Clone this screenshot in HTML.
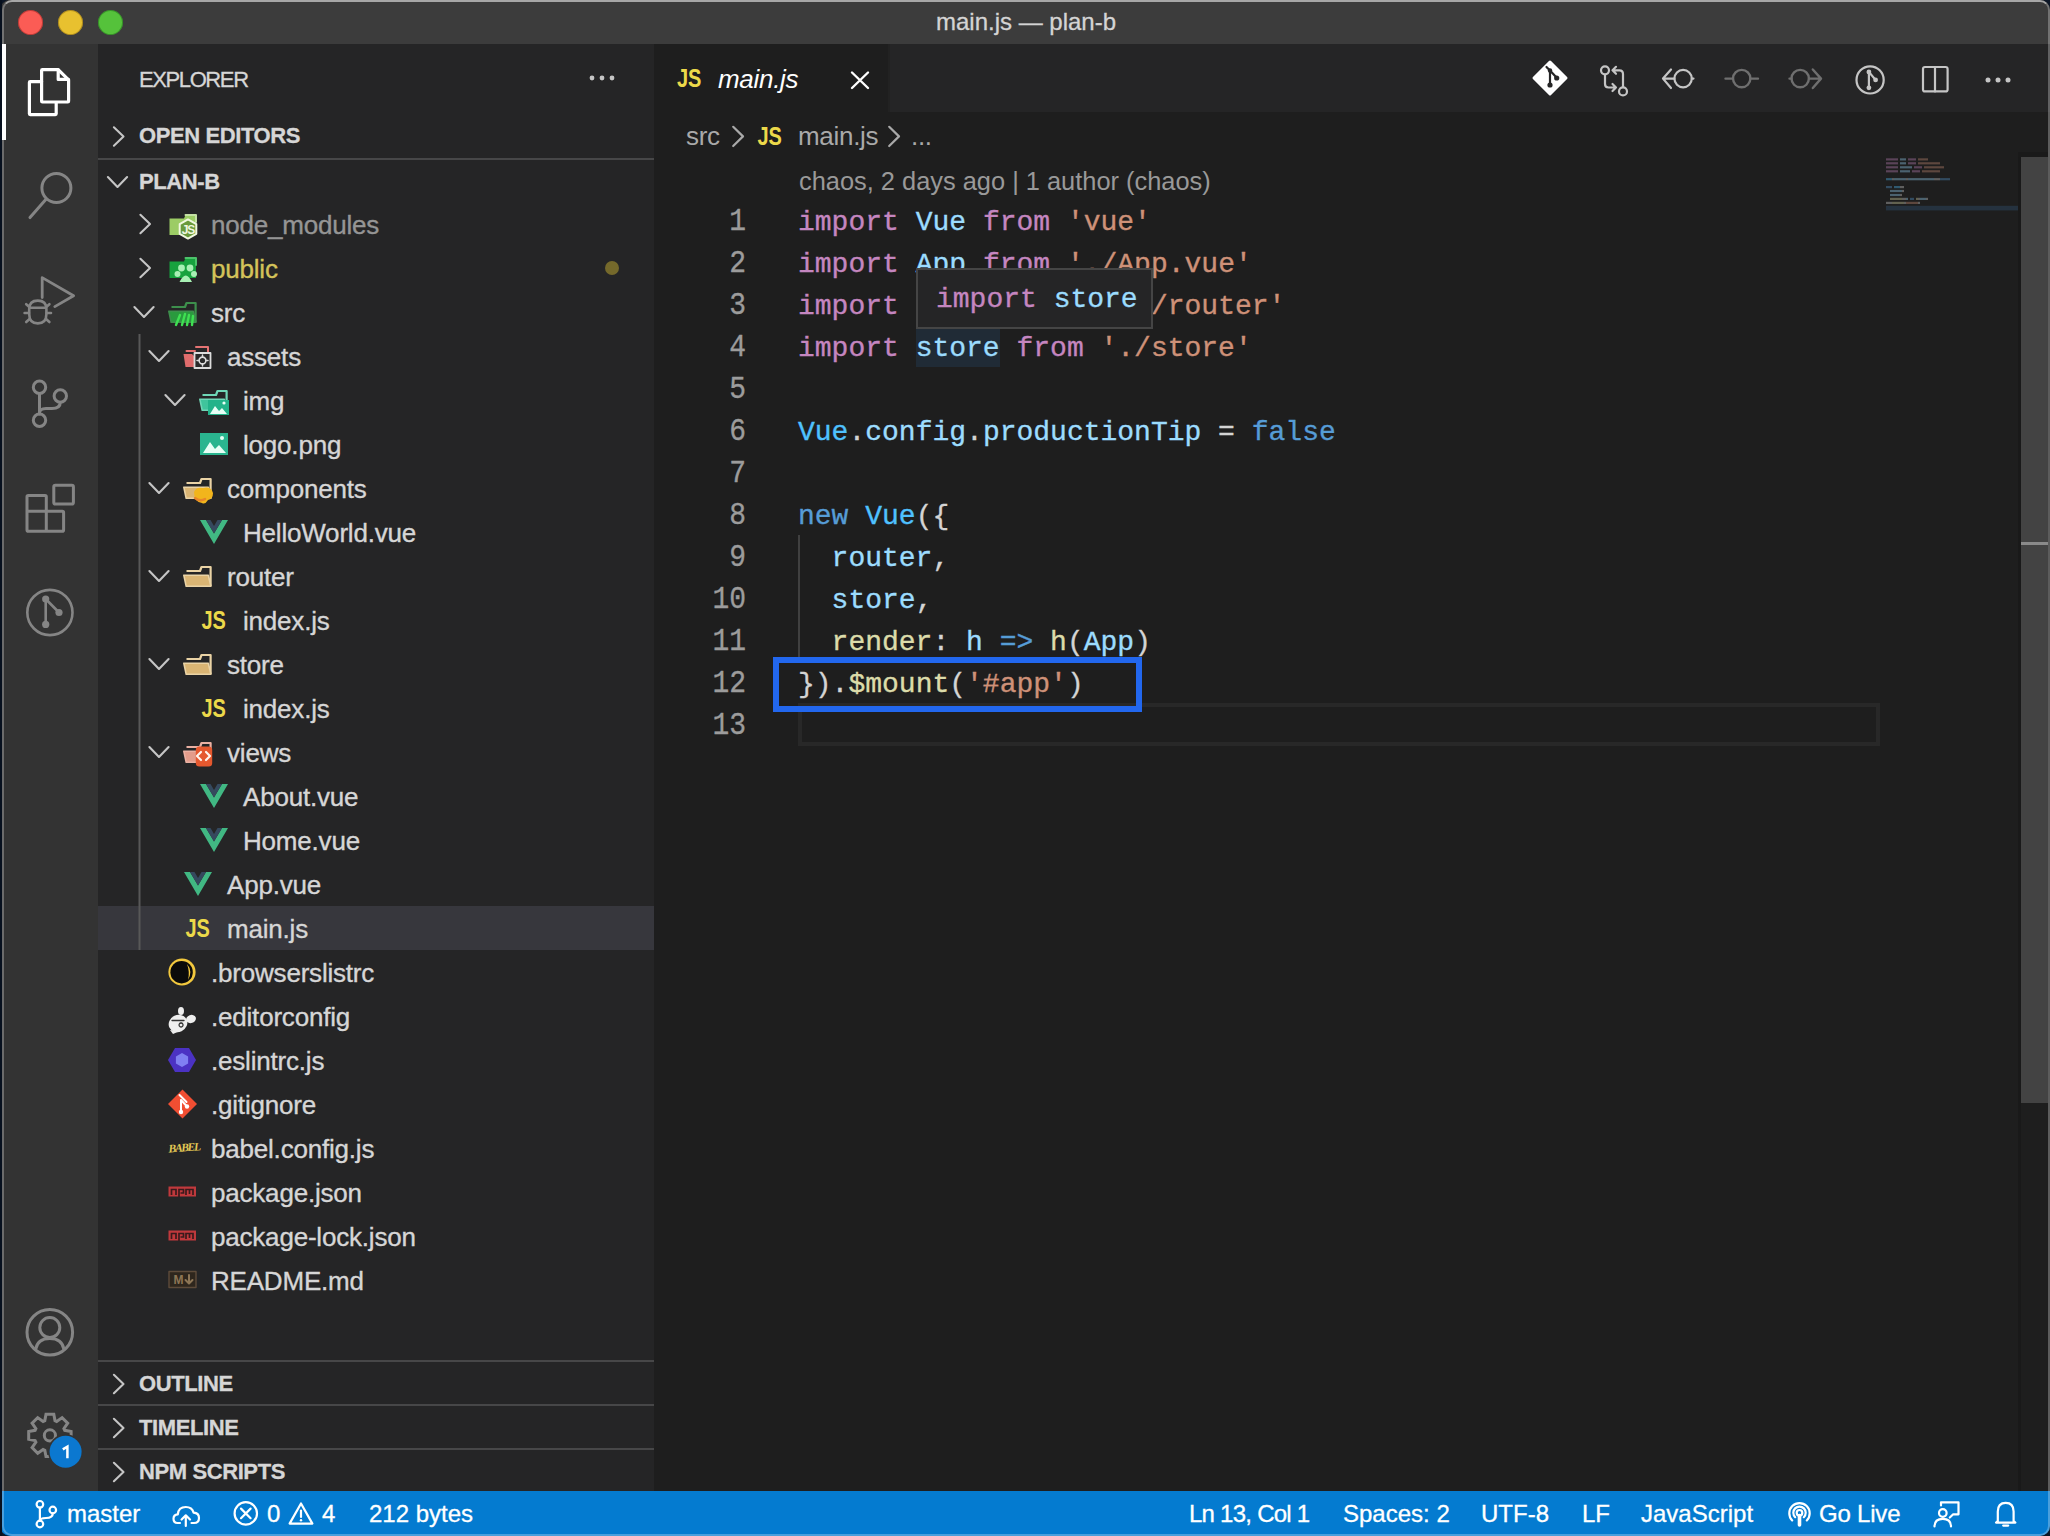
<!DOCTYPE html>
<html><head><meta charset="utf-8">
<style>
*{box-sizing:border-box;margin:0;padding:0}
html,body{width:2050px;height:1536px;overflow:hidden;background:#0c1626}
body{font-family:"Liberation Sans",sans-serif;position:relative}
.abs{position:absolute}
#win{position:absolute;left:0;top:0;width:2050px;height:1536px;border-radius:10px;overflow:hidden;background:#1e1e1e}
#frame{position:absolute;left:2px;top:0;width:2048px;height:1536px;border-radius:10px;border:2px solid rgba(255,255,255,0.28);border-top-color:rgba(255,255,255,0.55);pointer-events:none}
#lstrip{position:absolute;left:0;top:0;width:2px;height:1536px;background:#07101e}
#title{left:0;top:0;width:2050px;height:44px;background:#3c3c3c}
#title .t{left:0;width:2050px;top:0;height:44px;line-height:44px;text-align:center;color:#d4d4d4;font-size:24px;-webkit-text-stroke:0.3px currentColor;padding-left:2px}
.tl{width:25px;height:25px;border-radius:50%;top:10px}
#act{left:0;top:44px;width:98px;height:1447px;background:#333333}
#side{left:98px;top:44px;width:556px;height:1447px;background:#252526}
#tabs{left:654px;top:44px;width:1396px;height:68px;background:#252526}
#status{left:0;top:1491px;width:2050px;height:45px;background:#047bd0;color:#fff;font-size:24px}
.row{position:absolute;left:0;width:556px;height:44px;font-size:26px;color:#cccccc;line-height:44px;white-space:pre}
.row span.l{position:absolute;top:0}
.lbl{position:absolute;height:44px;line-height:45px;padding-top:1px;font-size:26px;color:#d6d6d6;white-space:pre;letter-spacing:-0.2px;-webkit-text-stroke:0.35px currentColor}
.hdrt{position:absolute;height:44px;line-height:44px;font-size:22px;font-weight:bold;color:#d6d6d6;white-space:pre;letter-spacing:-0.4px;-webkit-text-stroke:0.3px currentColor}
.hdr{position:absolute;left:0;width:556px;height:44px;font-size:22px;font-weight:bold;color:#cccccc;line-height:44px}
.code{position:absolute;font-family:"Liberation Mono",monospace;font-size:28px;line-height:42px;white-space:pre;color:#d4d4d4;-webkit-text-stroke:0.35px currentColor}
.code span{-webkit-text-stroke:0.35px currentColor}
.ln{position:absolute;font-family:"Liberation Mono",monospace;font-size:28px;line-height:42px;color:#858585;text-align:right;width:100px;-webkit-text-stroke:0.3px currentColor}
.k{color:#c586c0}.v{color:#9cdcfe}.c{color:#4fc1ff}.s{color:#ce9178}.b{color:#569cd6}.f{color:#dcdcaa}
</style></head><body>
<div id="win">
  <div id="title" class="abs">
    <div class="t abs">main.js — plan-b</div>
    <div class="tl abs" style="left:18px;background:#fb5c55;box-shadow:inset 0 0 0 1px rgba(120,20,20,0.45)"></div>
    <div class="tl abs" style="left:58px;background:#e8c12f;box-shadow:inset 0 0 0 1px rgba(110,80,10,0.45)"></div>
    <div class="tl abs" style="left:98px;background:#55c23b;box-shadow:inset 0 0 0 1px rgba(20,90,20,0.45)"></div>
  </div>
  <div id="act" class="abs">
    <div class="abs" style="left:2px;top:0;width:4px;height:96px;background:#ffffff"></div>
    <svg class="abs" style="left:0;top:0" width="98" height="1447" viewBox="0 44 98 1447" fill="none" stroke-linecap="round" stroke-linejoin="round">
      <g stroke="#ffffff" stroke-width="3.2">
        <path d="M41.6 81.6 H30.2 Q29.4 81.6 29.4 82.4 V113.8 Q29.4 114.6 30.2 114.6 H55.4 Q56.2 114.6 56.2 113.8 V102.8"/>
        <path d="M42.4 69.6 H58.2 L68.6 79.8 V101.2 Q68.6 102 67.8 102 H42.4 Q41.6 102 41.6 101.2 V70.4 Q41.6 69.6 42.4 69.6 Z"/>
        <path d="M58.2 69.8 V79.4 H68.4"/>
      </g>
      <g stroke="#858585" stroke-width="3">
        <circle cx="56.4" cy="188" r="14.5"/>
        <path d="M45.8 199.4 L30 217.6"/>
        <path d="M42.2 297.5 V277.6 L73.6 295.8 L54.8 306.6" stroke-width="2.8"/>
        <path d="M29.2 309 Q29.2 300.6 37.8 300.6 Q46.4 300.6 46.4 309 V314 Q46.4 323.4 37.8 323.4 Q29.2 323.4 29.2 314 Z M29.2 307.8 H46.4" stroke-width="2.6"/><path d="M26.2 304.2 L29.4 307 M49.4 304.2 L46.2 307 M24.6 313 H29 M51 313 H46.6 M26.2 322 L29.6 319 M49.4 322 L46 319" stroke-width="2.6"/>
        <circle cx="39.5" cy="387.3" r="6.2"/>
        <circle cx="39.5" cy="420.2" r="6.2"/>
        <circle cx="60.3" cy="396" r="6.2"/>
        <path d="M39.5 393.5 V414"/>
        <path d="M60.3 402.2 Q60.3 408.5 52 408.5 H46 Q39.5 408.5 39.5 413"/>
        <path d="M28.3 495.5 H45 Q46.3 495.5 46.3 496.8 V511.3 H62.3 Q63.6 511.3 63.6 512.6 V529.9 Q63.6 531.2 62.3 531.2 H28.3 Q27 531.2 27 529.9 V496.8 Q27 495.5 28.3 495.5 Z M27 511.3 H46.3 V531.2"/>
        <rect x="53.8" y="485.2" width="19.6" height="18.8" rx="1.6"/>
        <circle cx="49.9" cy="612.5" r="22.6" stroke-width="2.6"/>
        <path d="M45.7 599 V624.4 M45.7 599 L59 612.5" stroke-width="2.6"/>
      </g>
      <g fill="#858585" stroke="none">
        <circle cx="45.7" cy="599" r="3.6"/><circle cx="45.7" cy="624.4" r="3.6"/><circle cx="59" cy="612.5" r="3.6"/>
      </g>
      <g stroke="#858585" stroke-width="3">
        <circle cx="49.8" cy="1332.3" r="22.8"/>
        <circle cx="49.8" cy="1327.6" r="10"/>
        <path d="M35.6 1349.6 Q37.5 1338.6 49.8 1338.6 Q62.1 1338.6 64 1349.6"/>
      </g>
      <g><path stroke="#858585" stroke-width="3" stroke-linejoin="miter" d="M44.8 1420.6 L46.0 1414.2 L53.8 1414.2 L55.0 1420.6 L56.7 1421.4 L62.1 1417.6 L67.7 1423.2 L63.9 1428.6 L64.7 1430.3 L71.1 1431.5 L71.1 1439.3 L64.7 1440.5 L63.9 1442.2 L67.7 1447.6 L62.1 1453.2 L56.7 1449.4 L55.0 1450.2 L53.8 1456.6 L46.0 1456.6 L44.8 1450.2 L43.1 1449.4 L37.7 1453.2 L32.1 1447.6 L35.9 1442.2 L35.1 1440.5 L28.7 1439.3 L28.7 1431.5 L35.1 1430.3 L35.9 1428.6 L32.1 1423.2 L37.7 1417.6 L43.1 1421.4 Z"/><circle cx="49.9" cy="1435.4" r="5.6" stroke="#858585" stroke-width="3"/></g>
      <circle cx="65.6" cy="1451.7" r="17.5" fill="#333333"/><circle cx="65.6" cy="1451.7" r="16" fill="#0b78d0"/><path d="M62.8 1449.4 L67.4 1446.6 V1458.2" stroke="#ffffff" stroke-width="2.5" fill="none" stroke-linecap="butt" stroke-linejoin="miter"/>
    </svg>
    
  </div>
  <div id="side" class="abs">
<div class="hdrt" style="left:41px;top:0;height:70px;line-height:72px;font-weight:normal;letter-spacing:-1.4px">EXPLORER</div>
<div class="hdrt" style="left:41px;top:70px">OPEN EDITORS</div>
<div class="abs" style="left:0;top:114px;width:556px;height:2px;background:#474748"></div>
<div class="hdrt" style="left:41px;top:116px">PLAN-B</div>
<div class="abs" style="left:0;top:1316px;width:556px;height:2px;background:#474748"></div>
<div class="hdrt" style="left:41px;top:1318px">OUTLINE</div>
<div class="abs" style="left:0;top:1360px;width:556px;height:2px;background:#474748"></div>
<div class="hdrt" style="left:41px;top:1362px">TIMELINE</div>
<div class="abs" style="left:0;top:1404px;width:556px;height:2px;background:#474748"></div>
<div class="hdrt" style="left:41px;top:1406px">NPM SCRIPTS</div>
<div class="lbl" style="left:113px;top:158px;color:#959595;">node_modules</div>
<div class="lbl" style="left:113px;top:202px;color:#d4c35a;">public</div>
<div class="lbl" style="left:113px;top:246px;">src</div>
<div class="lbl" style="left:129px;top:290px;">assets</div>
<div class="lbl" style="left:145px;top:334px;">img</div>
<div class="lbl" style="left:145px;top:378px;">logo.png</div>
<div class="lbl" style="left:129px;top:422px;">components</div>
<div class="lbl" style="left:145px;top:466px;">HelloWorld.vue</div>
<div class="lbl" style="left:129px;top:510px;">router</div>
<div class="lbl" style="left:145px;top:554px;">index.js</div>
<div class="lbl" style="left:129px;top:598px;">store</div>
<div class="lbl" style="left:145px;top:642px;">index.js</div>
<div class="lbl" style="left:129px;top:686px;">views</div>
<div class="lbl" style="left:145px;top:730px;">About.vue</div>
<div class="lbl" style="left:145px;top:774px;">Home.vue</div>
<div class="lbl" style="left:129px;top:818px;">App.vue</div>
<div class="abs" style="left:0;top:862px;width:556px;height:44px;background:#37373d"></div>
<div class="lbl" style="left:129px;top:862px;">main.js</div>
<div class="lbl" style="left:113px;top:906px;">.browserslistrc</div>
<div class="lbl" style="left:113px;top:950px;">.editorconfig</div>
<div class="lbl" style="left:113px;top:994px;">.eslintrc.js</div>
<div class="lbl" style="left:113px;top:1038px;">.gitignore</div>
<div class="lbl" style="left:113px;top:1082px;">babel.config.js</div>
<div class="lbl" style="left:113px;top:1126px;">package.json</div>
<div class="lbl" style="left:113px;top:1170px;">package-lock.json</div>
<div class="lbl" style="left:113px;top:1214px;">README.md</div>
<svg class="abs" style="left:0;top:0" width="556" height="1447" viewBox="98 44 556 1447" stroke-linecap="round" stroke-linejoin="round"><rect x="138.5" y="334" width="2" height="616" fill="#585858"/><path d="M140.4 214.8 L150 224 L140.4 233.2" stroke="#c5c5c5" stroke-width="2.1" fill="none"/><path d="M169.5 218.5 H184 L185.5 215 H196 V235 H169.5 Z" fill="#9ccc65"/><path d="M185.5 215 H196 V222" stroke="#c5e1a5" stroke-width="2" fill="none"/><polygon points="188.0,219.4 196.3,224.2 196.3,233.8 188.0,238.6 179.7,233.8 179.7,224.2" fill="#6a9a3c" stroke="#f0f8e0" stroke-width="2"/><text x="188" y="233.5" font-size="12" font-weight="bold" fill="#f0f8e0" text-anchor="middle" font-family="Liberation Sans" letter-spacing="-1">JS</text><path d="M140.4 258.8 L150 268 L140.4 277.2" stroke="#c5c5c5" stroke-width="2.1" fill="none"/><path d="M169.5 261.5 H184 L185.5 258 H196 V278 H169.5 Z" fill="#17a23e"/><path d="M185.5 258 H196 V265" stroke="#4cc26a" stroke-width="2" fill="none"/><circle cx="181.5" cy="268" r="3.4" fill="#a8f0b4"/><circle cx="190" cy="268" r="3.4" fill="#a8f0b4"/><circle cx="177.5" cy="274" r="3" fill="#a8f0b4"/><circle cx="194" cy="274" r="3" fill="#a8f0b4"/><path d="M179.5 282 Q185.8 269 192 282 Z" fill="#a8f0b4"/><path d="M134.4 307 L144 317 L153.6 307" stroke="#c5c5c5" stroke-width="2.1" fill="none"/><path d="M171.5 307 H185 L186.5 303 H195.6 V322" stroke="#3d8f4c" stroke-width="2.2" fill="none" stroke-linecap="butt"/><path d="M168.8 311.2 H193.3 L195.9 322.3 H171.2 Z" fill="#2a9a3e" stroke="#3d8f4c" stroke-width="1.6"/><path d="M176 325 L180 315 M182 325 L185 314 M187 325 L189 315 M192 325 L193 316" stroke="#3fe052" stroke-width="2.4" fill="none"/><path d="M149.4 351 L159 361 L168.6 351" stroke="#c5c5c5" stroke-width="2.1" fill="none"/><path d="M183.5 354 H192 L194 356 V367 H185.5 Z" fill="#e06c6c"/><path d="M186.5 351 H195 M196 347 H208 V352" fill="none" stroke="#e57373" stroke-width="2"/><rect x="194.5" y="353" width="16" height="15" fill="#2a2a2a" stroke="#dcdcdc" stroke-width="1.8"/><circle cx="202.5" cy="360.5" r="3.4" fill="none" stroke="#dcdcdc" stroke-width="1.6"/><path d="M202.5 355 V357 M202.5 364 V366 M197 360.5 H199 M206 360.5 H208" stroke="#dcdcdc" stroke-width="1.5"/><path d="M165.4 395 L175 405 L184.6 395" stroke="#c5c5c5" stroke-width="2.1" fill="none"/><path d="M202.5 395 H216 L217.5 391 H226.6 V410" stroke="#6fd6b6" stroke-width="2.2" fill="none" stroke-linecap="butt"/><path d="M199.8 399.2 H224.3 L226.9 410.3 H202.2 Z" fill="#40c49c" stroke="#6fd6b6" stroke-width="1.6"/><rect x="208" y="400" width="21" height="15" fill="#23b38a"/><path d="M210 414 L215 406 L219 411 L222 408 L227 414 Z" fill="#e8fff6"/><circle cx="224" cy="403" r="1.6" fill="#e8fff6"/><rect x="200" y="433" width="28" height="22" fill="#2ab58f"/><path d="M203 453 L210 442 L215 449 L219 445 L226 453 Z" fill="#e8fff6"/><circle cx="222" cy="438" r="2" fill="#e8fff6"/><path d="M149.4 483 L159 493 L168.6 483" stroke="#c5c5c5" stroke-width="2.1" fill="none"/><path d="M186.5 483 H200 L201.5 479 H210.6 V498" stroke="#ead3a5" stroke-width="2.2" fill="none" stroke-linecap="butt"/><path d="M183.8 487.2 H208.3 L210.9 498.3 H186.2 Z" fill="#dab574" stroke="#ead3a5" stroke-width="1.6"/><path d="M194 492 Q196 486.5 203 488 Q211 486 213 493 Q213 499 208 500 Q205 505 202 503 Q194 502 194 492 Z" fill="#f2b51c"/><path d="M195 498 Q200 502 205 499" stroke="#e8862a" stroke-width="2.5" fill="none"/><path d="M200 520 H206 L214 533.5 L222 520 H228 L214 544 Z" fill="#41b883"/><path d="M206 520 H210.5 L214 526 L217.5 520 H222 L214 533.5 Z" fill="#35495e"/><path d="M149.4 571 L159 581 L168.6 571" stroke="#c5c5c5" stroke-width="2.1" fill="none"/><path d="M186.5 571 H200 L201.5 567 H210.6 V586" stroke="#ead3a5" stroke-width="2.2" fill="none" stroke-linecap="butt"/><path d="M183.8 575.2 H208.3 L210.9 586.3 H186.2 Z" fill="#dab574" stroke="#ead3a5" stroke-width="1.6"/><text transform="translate(201.5 628.5) scale(0.8 1)" x="0" y="0" font-size="25" font-weight="bold" fill="#ecd94a" font-family="Liberation Sans">JS</text><path d="M149.4 659 L159 669 L168.6 659" stroke="#c5c5c5" stroke-width="2.1" fill="none"/><path d="M186.5 659 H200 L201.5 655 H210.6 V674" stroke="#ead3a5" stroke-width="2.2" fill="none" stroke-linecap="butt"/><path d="M183.8 663.2 H208.3 L210.9 674.3 H186.2 Z" fill="#dab574" stroke="#ead3a5" stroke-width="1.6"/><text transform="translate(201.5 716.5) scale(0.8 1)" x="0" y="0" font-size="25" font-weight="bold" fill="#ecd94a" font-family="Liberation Sans">JS</text><path d="M149.4 747 L159 757 L168.6 747" stroke="#c5c5c5" stroke-width="2.1" fill="none"/><path d="M186.5 747 H200 L201.5 743 H210.6 V762" stroke="#eab0a2" stroke-width="2.2" fill="none" stroke-linecap="butt"/><path d="M183.8 751.2 H208.3 L210.9 762.3 H186.2 Z" fill="#e39c8b" stroke="#eab0a2" stroke-width="1.6"/><rect x="195.8" y="746.6" width="16.4" height="20" rx="3.5" fill="#e5582e"/><path d="M201 752 L197 756 L201 760 M206 752 L210 756 L206 760" stroke="#fff4ec" stroke-width="2.2" fill="none"/><path d="M200 784 H206 L214 797.5 L222 784 H228 L214 808 Z" fill="#41b883"/><path d="M206 784 H210.5 L214 790 L217.5 784 H222 L214 797.5 Z" fill="#35495e"/><path d="M200 828 H206 L214 841.5 L222 828 H228 L214 852 Z" fill="#41b883"/><path d="M206 828 H210.5 L214 834 L217.5 828 H222 L214 841.5 Z" fill="#35495e"/><path d="M184 872 H190 L198 885.5 L206 872 H212 L198 896 Z" fill="#41b883"/><path d="M190 872 H194.5 L198 878 L201.5 872 H206 L198 885.5 Z" fill="#35495e"/><text transform="translate(185.5 936.5) scale(0.8 1)" x="0" y="0" font-size="25" font-weight="bold" fill="#ecd94a" font-family="Liberation Sans">JS</text><circle cx="182" cy="972" r="13.6" fill="#f2c83e"/><circle cx="181.6" cy="972.2" r="11.2" fill="#0a0a0a"/><path d="M187 964 Q193 971 188 980 Q190 972 187 964" fill="#f2c83e"/><ellipse cx="178" cy="1023.5" rx="9.5" ry="8.5" transform="rotate(-25 178 1023.5)" fill="#eeeeee"/><path d="M170 1030 L173 1034 L180 1031 Z" fill="#eeeeee"/><ellipse cx="181" cy="1011" rx="3" ry="4" fill="#eeeeee"/><ellipse cx="191" cy="1019" rx="5" ry="4" transform="rotate(-20 191 1019)" fill="#eeeeee"/><path d="M172 1020.5 H184 M181 1023 a2 2 0 1 0 0.1 0" stroke="#333" stroke-width="1.3" fill="none"/><polygon points="196.0,1060.0 189.0,1072.1 175.0,1072.1 168.0,1060.0 175.0,1047.9 189.0,1047.9" fill="#4b32c3"/><polygon points="182.0,1053.0 188.1,1056.5 188.1,1063.5 182.0,1067.0 175.9,1063.5 175.9,1056.5" fill="#8080f2"/><path d="M182.5 1089.5 L197.0 1104 L182.5 1118.5 L168.0 1104 Z" fill="#f14e32"/><path d="M179.5 1095 L186.5 1102 M181.0 1100 V1112 M181.0 1100 L186.5 1106" stroke="#fff" stroke-width="2" fill="none"/><circle cx="181.0" cy="1112" r="2.2" fill="#fff"/><circle cx="187.0" cy="1106.5" r="2.2" fill="#fff"/><text x="168.5" y="1151.5" font-size="11.5" font-weight="bold" font-style="italic" fill="#e3c955" font-family="Liberation Serif" letter-spacing="-1.3" transform="rotate(-4 182 1148)">BABEL</text><rect x="168.5" y="1186.5" width="27.5" height="10" fill="#c0393c"/><path d="M171.5 1195 V1189.5 H176 V1195 M179 1197 V1189.5 H183.5 V1193 H180.5 M186 1195 V1189.5 H193 V1195 M189.5 1189.5 V1194" stroke="#3a1a1c" stroke-width="1.7" fill="none" stroke-linecap="butt" stroke-linejoin="miter"/><rect x="168.5" y="1230.5" width="27.5" height="10" fill="#c0393c"/><path d="M171.5 1239 V1233.5 H176 V1239 M179 1241 V1233.5 H183.5 V1237 H180.5 M186 1239 V1233.5 H193 V1239 M189.5 1233.5 V1238" stroke="#3a1a1c" stroke-width="1.7" fill="none" stroke-linecap="butt" stroke-linejoin="miter"/><rect x="169" y="1271.5" width="27" height="16" fill="#2e261d" stroke="#5e4b3a" stroke-width="1.4"/><text x="178.5" y="1284" font-size="12" font-weight="bold" fill="#8d7656" text-anchor="middle" font-family="Liberation Sans">M</text><path d="M189 1275 V1283 M185.5 1280 L189 1283.5 L192.5 1280" stroke="#8d7656" stroke-width="2" fill="none"/><path d="M113.9 1374.8 L123.5 1384 L113.9 1393.2" stroke="#c5c5c5" stroke-width="2.1" fill="none"/><path d="M113.9 1418.8 L123.5 1428 L113.9 1437.2" stroke="#c5c5c5" stroke-width="2.1" fill="none"/><path d="M113.9 1462.8 L123.5 1472 L113.9 1481.2" stroke="#c5c5c5" stroke-width="2.1" fill="none"/><path d="M113.9 127.3 L123.5 136.5 L113.9 145.7" stroke="#c5c5c5" stroke-width="2.1" fill="none"/><path d="M107.9 177 L117.5 187 L127.1 177" stroke="#c5c5c5" stroke-width="2.1" fill="none"/><circle cx="612" cy="268" r="7" fill="#75692b"/><circle cx="592" cy="78" r="2.4" fill="#c5c5c5"/><circle cx="602" cy="78" r="2.4" fill="#c5c5c5"/><circle cx="612" cy="78" r="2.4" fill="#c5c5c5"/></svg>
</div>
  <div id="tabs" class="abs"></div>
  <div id="editor" class="abs" style="left:654px;top:112px;width:1396px;height:1379px;background:#1e1e1e"></div>
  <div id="edwrap" class="abs" style="left:654px;top:44px;width:1396px;height:1447px">
<div class="abs" style="left:0;top:0;width:234px;height:68px;background:#1e1e1e"></div>
<div class="abs" style="left:234px;top:0;width:2px;height:68px;background:#222222"></div>
<div class="abs" style="left:64px;top:0;height:68px;line-height:70px;font-size:26px;font-style:italic;color:#ffffff;white-space:pre;letter-spacing:-0.3px">main.js</div>
<div class="abs" style="left:32px;top:70px;color:#a9a9a9;font-size:26px;white-space:pre;letter-spacing:-0.3px;line-height:44px;height:44px">src</div>
<div class="abs" style="left:144px;top:70px;color:#a9a9a9;font-size:26px;white-space:pre;letter-spacing:-0.3px;line-height:44px;height:44px">main.js</div>
<div class="abs" style="left:257px;top:70px;color:#a9a9a9;font-size:26px;white-space:pre;letter-spacing:-0.3px;line-height:44px;height:44px">...</div>
<div class="abs" style="left:145px;top:117px;height:41px;line-height:41px;font-size:25.4px;color:#999999;white-space:pre">chaos, 2 days ago | 1 author (chaos)</div>
<div class="abs" style="left:262.0px;top:281px;width:84.3px;height:42px;background:#202b36"></div>
<div class="abs" style="left:144px;top:659px;width:1082px;height:43px;border:4px solid #282828"></div>
<div class="abs" style="left:144px;top:491px;width:2px;height:126px;background:#404040"></div>
<div class="ln" style="left:-8px;top:158px;color:#9c9c9c;transform:scaleY(1.15);transform-origin:50% 29px">1</div>
<div class="ln" style="left:-8px;top:200px;color:#9c9c9c;transform:scaleY(1.15);transform-origin:50% 29px">2</div>
<div class="ln" style="left:-8px;top:242px;color:#9c9c9c;transform:scaleY(1.15);transform-origin:50% 29px">3</div>
<div class="ln" style="left:-8px;top:284px;color:#9c9c9c;transform:scaleY(1.15);transform-origin:50% 29px">4</div>
<div class="ln" style="left:-8px;top:326px;color:#9c9c9c;transform:scaleY(1.15);transform-origin:50% 29px">5</div>
<div class="ln" style="left:-8px;top:368px;color:#9c9c9c;transform:scaleY(1.15);transform-origin:50% 29px">6</div>
<div class="ln" style="left:-8px;top:410px;color:#9c9c9c;transform:scaleY(1.15);transform-origin:50% 29px">7</div>
<div class="ln" style="left:-8px;top:452px;color:#9c9c9c;transform:scaleY(1.15);transform-origin:50% 29px">8</div>
<div class="ln" style="left:-8px;top:494px;color:#9c9c9c;transform:scaleY(1.15);transform-origin:50% 29px">9</div>
<div class="ln" style="left:-8px;top:536px;color:#9c9c9c;transform:scaleY(1.15);transform-origin:50% 29px">10</div>
<div class="ln" style="left:-8px;top:578px;color:#9c9c9c;transform:scaleY(1.15);transform-origin:50% 29px">11</div>
<div class="ln" style="left:-8px;top:620px;color:#9c9c9c;transform:scaleY(1.15);transform-origin:50% 29px">12</div>
<div class="ln" style="left:-8px;top:662px;color:#9c9c9c;transform:scaleY(1.15);transform-origin:50% 29px">13</div>
<div class="code" style="left:144px;top:158px"><span style="color:#c586c0">import</span><span style="color:#d4d4d4"> </span><span style="color:#9cdcfe">Vue</span><span style="color:#d4d4d4"> </span><span style="color:#c586c0">from</span><span style="color:#d4d4d4"> </span><span style="color:#ce9178">'vue'</span></div>
<div class="code" style="left:144px;top:200px"><span style="color:#c586c0">import</span><span style="color:#d4d4d4"> </span><span style="color:#9cdcfe">App</span><span style="color:#d4d4d4"> </span><span style="color:#c586c0">from</span><span style="color:#d4d4d4"> </span><span style="color:#ce9178">'./App.vue'</span></div>
<div class="code" style="left:144px;top:242px"><span style="color:#c586c0">import</span><span style="color:#d4d4d4"> </span><span style="color:#9cdcfe">router</span><span style="color:#d4d4d4"> </span><span style="color:#c586c0">from</span><span style="color:#d4d4d4"> </span><span style="color:#ce9178">'./router'</span></div>
<div class="code" style="left:144px;top:284px"><span style="color:#c586c0">import</span><span style="color:#d4d4d4"> </span><span style="color:#9cdcfe">store</span><span style="color:#d4d4d4"> </span><span style="color:#c586c0">from</span><span style="color:#d4d4d4"> </span><span style="color:#ce9178">'./store'</span></div>
<div class="code" style="left:144px;top:368px"><span style="color:#4fc1ff">Vue</span><span style="color:#d4d4d4">.</span><span style="color:#9cdcfe">config</span><span style="color:#d4d4d4">.</span><span style="color:#9cdcfe">productionTip</span><span style="color:#d4d4d4"> = </span><span style="color:#569cd6">false</span></div>
<div class="code" style="left:144px;top:452px"><span style="color:#569cd6">new</span><span style="color:#d4d4d4"> </span><span style="color:#4fc1ff">Vue</span><span style="color:#d4d4d4">({</span></div>
<div class="code" style="left:144px;top:494px"><span style="color:#d4d4d4">  </span><span style="color:#9cdcfe">router</span><span style="color:#d4d4d4">,</span></div>
<div class="code" style="left:144px;top:536px"><span style="color:#d4d4d4">  </span><span style="color:#9cdcfe">store</span><span style="color:#d4d4d4">,</span></div>
<div class="code" style="left:144px;top:578px"><span style="color:#d4d4d4">  </span><span style="color:#dcdcaa">render</span><span style="color:#d4d4d4">: </span><span style="color:#9cdcfe">h</span><span style="color:#d4d4d4"> </span><span style="color:#569cd6">=&gt;</span><span style="color:#d4d4d4"> </span><span style="color:#dcdcaa">h</span><span style="color:#d4d4d4">(</span><span style="color:#9cdcfe">App</span><span style="color:#d4d4d4">)</span></div>
<div class="code" style="left:144px;top:620px"><span style="color:#d4d4d4">})</span><span style="color:#d4d4d4">.</span><span style="color:#dcdcaa">$mount</span><span style="color:#d4d4d4">(</span><span style="color:#ce9178">'#app'</span><span style="color:#d4d4d4">)</span></div>
<div class="abs" style="left:262px;top:224px;width:237px;height:61px;background:#252526;border:2px solid #454545"></div>
<div class="code" style="left:282px;top:235px"><span style="color:#c586c0">import</span> <span style="color:#9cdcfe">store</span></div>
<div class="abs" style="left:119px;top:613px;width:369px;height:55px;border:6px solid #2267ee"></div>
<svg class="abs" style="left:0;top:0" width="1396" height="1447" viewBox="654 44 1396 1447"><rect x="1886" y="158.3" width="12" height="2.2" fill="#c586c0" opacity="0.36"/><rect x="1900" y="158.3" width="6" height="2.2" fill="#9cdcfe" opacity="0.36"/><rect x="1908" y="158.3" width="8" height="2.2" fill="#c586c0" opacity="0.36"/><rect x="1918" y="158.3" width="10" height="2.2" fill="#ce9178" opacity="0.36"/><rect x="1886" y="162.2" width="12" height="2.2" fill="#c586c0" opacity="0.36"/><rect x="1900" y="162.2" width="6" height="2.2" fill="#9cdcfe" opacity="0.36"/><rect x="1908" y="162.2" width="8" height="2.2" fill="#c586c0" opacity="0.36"/><rect x="1918" y="162.2" width="22" height="2.2" fill="#ce9178" opacity="0.36"/><rect x="1886" y="166.2" width="12" height="2.2" fill="#c586c0" opacity="0.36"/><rect x="1900" y="166.2" width="12" height="2.2" fill="#9cdcfe" opacity="0.36"/><rect x="1914" y="166.2" width="8" height="2.2" fill="#c586c0" opacity="0.36"/><rect x="1924" y="166.2" width="20" height="2.2" fill="#ce9178" opacity="0.36"/><rect x="1886" y="170.2" width="12" height="2.2" fill="#c586c0" opacity="0.36"/><rect x="1900" y="170.2" width="10" height="2.2" fill="#9cdcfe" opacity="0.36"/><rect x="1912" y="170.2" width="8" height="2.2" fill="#c586c0" opacity="0.36"/><rect x="1922" y="170.2" width="18" height="2.2" fill="#ce9178" opacity="0.36"/><rect x="1886" y="178.1" width="6" height="2.2" fill="#4fc1ff" opacity="0.36"/><rect x="1892" y="178.1" width="2" height="2.2" fill="#d4d4d4" opacity="0.36"/><rect x="1894" y="178.1" width="12" height="2.2" fill="#9cdcfe" opacity="0.36"/><rect x="1906" y="178.1" width="2" height="2.2" fill="#d4d4d4" opacity="0.36"/><rect x="1908" y="178.1" width="26" height="2.2" fill="#9cdcfe" opacity="0.36"/><rect x="1934" y="178.1" width="6" height="2.2" fill="#d4d4d4" opacity="0.36"/><rect x="1940" y="178.1" width="10" height="2.2" fill="#569cd6" opacity="0.36"/><rect x="1886" y="186.0" width="6" height="2.2" fill="#569cd6" opacity="0.36"/><rect x="1894" y="186.0" width="6" height="2.2" fill="#4fc1ff" opacity="0.36"/><rect x="1900" y="186.0" width="4" height="2.2" fill="#d4d4d4" opacity="0.36"/><rect x="1890" y="189.9" width="12" height="2.2" fill="#9cdcfe" opacity="0.36"/><rect x="1902" y="189.9" width="2" height="2.2" fill="#d4d4d4" opacity="0.36"/><rect x="1890" y="193.9" width="10" height="2.2" fill="#9cdcfe" opacity="0.36"/><rect x="1900" y="193.9" width="2" height="2.2" fill="#d4d4d4" opacity="0.36"/><rect x="1890" y="197.8" width="12" height="2.2" fill="#dcdcaa" opacity="0.36"/><rect x="1902" y="197.8" width="4" height="2.2" fill="#d4d4d4" opacity="0.36"/><rect x="1906" y="197.8" width="2" height="2.2" fill="#9cdcfe" opacity="0.36"/><rect x="1910" y="197.8" width="4" height="2.2" fill="#569cd6" opacity="0.36"/><rect x="1916" y="197.8" width="2" height="2.2" fill="#dcdcaa" opacity="0.36"/><rect x="1918" y="197.8" width="2" height="2.2" fill="#d4d4d4" opacity="0.36"/><rect x="1920" y="197.8" width="6" height="2.2" fill="#9cdcfe" opacity="0.36"/><rect x="1926" y="197.8" width="2" height="2.2" fill="#d4d4d4" opacity="0.36"/><rect x="1886" y="201.8" width="4" height="2.2" fill="#d4d4d4" opacity="0.36"/><rect x="1890" y="201.8" width="2" height="2.2" fill="#d4d4d4" opacity="0.36"/><rect x="1892" y="201.8" width="12" height="2.2" fill="#dcdcaa" opacity="0.36"/><rect x="1904" y="201.8" width="2" height="2.2" fill="#d4d4d4" opacity="0.36"/><rect x="1906" y="201.8" width="12" height="2.2" fill="#ce9178" opacity="0.36"/><rect x="1918" y="201.8" width="2" height="2.2" fill="#d4d4d4" opacity="0.36"/><rect x="1886" y="205.8" width="132" height="4.6" fill="#25323f"/></svg>
<div class="abs" style="left:1364px;top:108px;width:3px;height:1339px;background:#191919"></div>
<div class="abs" style="left:1364px;top:108px;width:30px;height:5px;background:#1a1a1a"></div>
<div class="abs" style="left:1367px;top:113px;width:27px;height:946px;background:#434343"></div>
<div class="abs" style="left:1367px;top:498px;width:27px;height:3px;background:#8a8a8a"></div>
<svg class="abs" style="left:0;top:0" width="1396" height="200" viewBox="654 44 1396 200" stroke-linecap="round" stroke-linejoin="round"><path d="M1550 62 L1566 78 L1550 94 L1534 78 Z" fill="#ffffff" stroke="#ffffff" stroke-width="3" stroke-linejoin="round"/><path d="M1546.5 67 L1550 70.5 V85 M1550 70.5 L1556.5 77.5" stroke="#252526" stroke-width="2.2" fill="none"/><circle cx="1550" cy="85" r="2.6" fill="#252526"/><circle cx="1556.7" cy="78" r="2.6" fill="#252526"/><circle cx="1550" cy="70.5" r="2.2" fill="#252526"/><circle cx="1605" cy="70.3" r="4" stroke="#c5c5c5" stroke-width="2.2" fill="none"/><circle cx="1623" cy="91.4" r="4" stroke="#c5c5c5" stroke-width="2.2" fill="none"/><path d="M1605 75 V84 Q1605 87.5 1608.5 87.5 H1616 M1612.5 84 L1616 87.5 L1612.5 91" stroke="#c5c5c5" stroke-width="2.2" fill="none"/><path d="M1623 86.7 V74 Q1623 70.3 1619.5 70.3 H1612.5 M1616 66.8 L1612.5 70.3 L1616 73.8" stroke="#c5c5c5" stroke-width="2.2" fill="none"/><path d="M1671 69.5 L1663 78.6 L1671 88 M1663 78.6 H1674.4 M1691.8 78.6 H1693.5" stroke="#c5c5c5" stroke-width="2.2" fill="none"/><circle cx="1683.1" cy="78.6" r="8.7" stroke="#c5c5c5" stroke-width="2.2" fill="none"/><path d="M1725.5 78.6 H1733 M1750.4 78.6 H1758" stroke="#6f6f6f" stroke-width="2.4" fill="none"/><circle cx="1741.7" cy="78.6" r="8.7" stroke="#6f6f6f" stroke-width="2.4" fill="none"/><path d="M1789.5 78.6 H1791.5 M1809 78.6 H1821 L1812.8 69.5 M1821 78.6 L1812.8 88" stroke="#6f6f6f" stroke-width="2.4" fill="none"/><circle cx="1800.2" cy="78.6" r="8.7" stroke="#6f6f6f" stroke-width="2.4" fill="none"/><circle cx="1870.1" cy="79.9" r="13.6" stroke="#c5c5c5" stroke-width="2.2" fill="none"/><path d="M1868.9 72 V87.8 M1868.9 72 L1875.6 79.9" stroke="#c5c5c5" stroke-width="2.2" fill="none"/><circle cx="1868.9" cy="72" r="2.4" fill="#c5c5c5"/><circle cx="1868.9" cy="87.8" r="2.4" fill="#c5c5c5"/><circle cx="1875.6" cy="79.9" r="2.4" fill="#c5c5c5"/><rect x="1923" y="67" width="24.6" height="24.4" rx="2" stroke="#c5c5c5" stroke-width="2.2" fill="none"/><path d="M1935 67 V91.4" stroke="#c5c5c5" stroke-width="2.2" fill="none"/><circle cx="1988" cy="80" r="2.5" fill="#c5c5c5"/><circle cx="1998" cy="80" r="2.5" fill="#c5c5c5"/><circle cx="2008" cy="80" r="2.5" fill="#c5c5c5"/><text transform="translate(677 86.5) scale(0.8 1)" font-size="25" font-weight="bold" fill="#ecd94a" font-family="Liberation Sans">JS</text><text transform="translate(757.5 144.5) scale(0.8 1)" font-size="25" font-weight="bold" fill="#ecd94a" font-family="Liberation Sans">JS</text><path d="M852 72.5 L868 88 M868 72.5 L852 88" stroke="#ffffff" stroke-width="2.4" stroke-linecap="round"/><path d="M733.2 126.8 L743 136.4 L733.2 146" stroke="#a9a9a9" stroke-width="2.2" fill="none" stroke-linecap="round" stroke-linejoin="round"/><path d="M889.2 126.8 L899 136.4 L889.2 146" stroke="#a9a9a9" stroke-width="2.2" fill="none" stroke-linecap="round" stroke-linejoin="round"/></svg>
</div>
  <div id="status" class="abs">
<div class="abs" style="left:67px;top:0;height:45px;line-height:45px;font-size:24px;color:#ffffff;white-space:pre;-webkit-text-stroke:0.3px #fff;">master</div>
<div class="abs" style="left:267px;top:0;height:45px;line-height:45px;font-size:24px;color:#ffffff;white-space:pre;-webkit-text-stroke:0.3px #fff;">0</div>
<div class="abs" style="left:322px;top:0;height:45px;line-height:45px;font-size:24px;color:#ffffff;white-space:pre;-webkit-text-stroke:0.3px #fff;">4</div>
<div class="abs" style="left:369px;top:0;height:45px;line-height:45px;font-size:24px;color:#ffffff;white-space:pre;-webkit-text-stroke:0.3px #fff;">212 bytes</div>
<div class="abs" style="left:1189px;top:0;height:45px;line-height:45px;font-size:24px;color:#ffffff;white-space:pre;-webkit-text-stroke:0.3px #fff;letter-spacing:-0.75px">Ln 13, Col 1</div>
<div class="abs" style="left:1343px;top:0;height:45px;line-height:45px;font-size:24px;color:#ffffff;white-space:pre;-webkit-text-stroke:0.3px #fff;">Spaces: 2</div>
<div class="abs" style="left:1481px;top:0;height:45px;line-height:45px;font-size:24px;color:#ffffff;white-space:pre;-webkit-text-stroke:0.3px #fff;">UTF-8</div>
<div class="abs" style="left:1582px;top:0;height:45px;line-height:45px;font-size:24px;color:#ffffff;white-space:pre;-webkit-text-stroke:0.3px #fff;">LF</div>
<div class="abs" style="left:1641px;top:0;height:45px;line-height:45px;font-size:24px;color:#ffffff;white-space:pre;-webkit-text-stroke:0.3px #fff;">JavaScript</div>
<div class="abs" style="left:1819px;top:0;height:45px;line-height:45px;font-size:24px;color:#ffffff;white-space:pre;-webkit-text-stroke:0.3px #fff;letter-spacing:-0.2px">Go Live</div>
<svg class="abs" style="left:0;top:0" width="2050" height="45" viewBox="0 1491 2050 45"><circle cx="39.9" cy="1504.3" r="3.3" stroke="#ffffff" stroke-width="2.2" fill="none" stroke-linecap="round" stroke-linejoin="round"/><circle cx="39.9" cy="1524" r="3.3" stroke="#ffffff" stroke-width="2.2" fill="none" stroke-linecap="round" stroke-linejoin="round"/><circle cx="52.8" cy="1510" r="3.3" stroke="#ffffff" stroke-width="2.2" fill="none" stroke-linecap="round" stroke-linejoin="round"/><path d="M39.9 1507.6 V1520.7 M52.8 1513.3 Q52.8 1518 46 1518 Q39.9 1518 39.9 1521" stroke="#ffffff" stroke-width="2.2" fill="none" stroke-linecap="round" stroke-linejoin="round"/><path d="M180 1523 H177.5 Q173.5 1523 173.5 1518.8 Q173.5 1514.6 177.8 1514.3 Q178.5 1507 185.8 1507 Q192 1507 193.6 1512.6 Q199 1513 199 1518 Q199 1523 194 1523 H191.5" stroke="#ffffff" stroke-width="2.2" fill="none" stroke-linecap="round" stroke-linejoin="round"/><path d="M185.8 1526 V1515.5 M181.6 1519.5 L185.8 1515.3 L190 1519.5" stroke="#ffffff" stroke-width="2.2" fill="none" stroke-linecap="round" stroke-linejoin="round"/><circle cx="245.8" cy="1513.4" r="11.2" stroke="#ffffff" stroke-width="2.2" fill="none" stroke-linecap="round" stroke-linejoin="round"/><path d="M241 1508.6 L250.6 1518.2 M250.6 1508.6 L241 1518.2" stroke="#ffffff" stroke-width="2.2" fill="none" stroke-linecap="round" stroke-linejoin="round"/><path d="M301 1503.5 L312.4 1523.6 H289.6 Z" stroke="#ffffff" stroke-width="2.2" fill="none" stroke-linecap="round" stroke-linejoin="round"/><path d="M301 1510.5 V1517" stroke="#ffffff" stroke-width="2.2" fill="none" stroke-linecap="round" stroke-linejoin="round"/><circle cx="301" cy="1520.3" r="1.2" fill="#fff"/><circle cx="1799.5" cy="1512.8" r="2.8" stroke="#ffffff" stroke-width="2.2" fill="none" stroke-linecap="round" stroke-linejoin="round"/><path d="M1799.5 1515.5 V1525" stroke="#fff" stroke-width="3.6" stroke-linecap="round"/><path d="M1795.2 1517.2 A6.2 6.2 0 1 1 1803.8 1517.2 M1792.2 1520.4 A10.2 10.2 0 1 1 1806.8 1520.4" stroke="#ffffff" stroke-width="2.2" fill="none" stroke-linecap="round" stroke-linejoin="round"/><circle cx="1942.8" cy="1513" r="3.8" stroke="#ffffff" stroke-width="2.2" fill="none" stroke-linecap="round" stroke-linejoin="round"/><path d="M1934.5 1526.5 Q1934.5 1518.8 1942.8 1518.8 Q1951 1518.8 1951 1526.5" stroke="#ffffff" stroke-width="2.2" fill="none" stroke-linecap="round" stroke-linejoin="round"/><path d="M1941 1505.5 V1502.3 H1958.5 V1514.3 H1953.2 L1949.8 1517.5" stroke="#ffffff" stroke-width="2.2" fill="none" stroke-linecap="round" stroke-linejoin="round"/><path d="M1997.8 1521.2 V1511.5 Q1997.8 1502.8 2005.7 1502.8 Q2013.6 1502.8 2013.6 1511.5 V1521.2 L2015.4 1522.6 H1996 Z" stroke="#ffffff" stroke-width="2.2" fill="none" stroke-linecap="round" stroke-linejoin="round"/><path d="M2003.2 1525.6 H2008.2" stroke="#ffffff" stroke-width="2.2" fill="none" stroke-linecap="round" stroke-linejoin="round"/></svg>
</div>
</div>
<div id="lstrip"></div>
<div id="frame"></div>
</body></html>
